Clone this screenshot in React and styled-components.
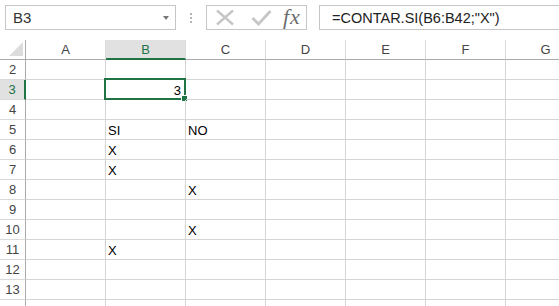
import React from "react";
import styled, { createGlobalStyle } from "styled-components";

const GREEN = "#217346";

const Global = createGlobalStyle`
  html, body { margin: 0; padding: 0; background: #fff; overflow: hidden; }
  body { font-family: "Liberation Sans", Arial, sans-serif; }
`;

const Page = styled.div`
  width: 559px;
  height: 306px;
  overflow: hidden;
  background: #fff;
`;

const FormulaRow = styled.div`
  display: flex;
  align-items: flex-start;
  height: 40px;
  padding: 5px 0 0 5px;
  box-sizing: border-box;
`;

const NameBox = styled.div`
  width: 171px;
  height: 25px;
  box-sizing: border-box;
  border: 1px solid #c6c6c6;
  display: flex;
  align-items: center;
  justify-content: space-between;
  padding: 0 6px 0 7px;
  font-size: 15px;
  color: #333;
`;

const Caret = styled.span`
  width: 0;
  height: 0;
  border-left: 3.5px solid transparent;
  border-right: 3.5px solid transparent;
  border-top: 4px solid #777;
  margin-top: 1px;
`;

const Grip = styled.div`
  width: 30px;
  height: 25px;
  display: flex;
  flex-direction: column;
  align-items: center;
  justify-content: center;
  gap: 2px;

  span {
    width: 2px;
    height: 2px;
    background: #b4b4b4;
  }
`;

const Buttons = styled.div`
  width: 101px;
  height: 25px;
  box-sizing: border-box;
  border: 1px solid #c6c6c6;
  display: flex;
  align-items: center;
  padding-left: 8px;
`;

const IconSlot = styled.div`
  width: ${(p) => p.w}px;
  height: 23px;
  display: flex;
  align-items: center;
`;

const Fx = styled.span`
  font-family: "Liberation Serif", "DejaVu Serif", serif;
  font-style: italic;
  font-size: 22px;
  color: #6d6d6d;
  letter-spacing: 1px;
  line-height: 1;
  margin-top: -1px;
`;

const FormulaInput = styled.div`
  flex: 1;
  height: 25px;
  margin-left: 12px;
  box-sizing: border-box;
  border: 1px solid #c6c6c6;
  border-right: none;
  display: flex;
  align-items: center;
  padding-left: 12px;
  font-size: 14.5px;
  color: #222;
  white-space: nowrap;
`;

const Sheet = styled.div`
  display: grid;
  grid-template-columns: 26px repeat(7, 80px);
  grid-auto-rows: 20px;
`;

const Corner = styled.div`
  box-sizing: border-box;
  border-right: 1px solid #ababab;
  border-bottom: 1px solid #ababab;
  display: flex;
  align-items: flex-end;
  justify-content: flex-end;
  padding: 0 2px 3px 0;
`;

const ColHead = styled.div`
  box-sizing: border-box;
  border-right: 1px solid #dadada;
  border-bottom: ${(p) => (p.active ? `2px solid ${GREEN}` : "1px solid #ababab")};
  background: ${(p) => (p.active ? "#e1e1e1" : "#fff")};
  color: ${(p) => (p.active ? GREEN : "#444")};
  font-size: 13px;
  display: flex;
  align-items: center;
  justify-content: center;
  padding-top: ${(p) => (p.active ? "1px" : "0")};
`;

const RowHead = styled.div`
  box-sizing: border-box;
  border-bottom: 1px solid #dadada;
  border-right: ${(p) => (p.active ? `2px solid ${GREEN}` : "1px solid #ababab")};
  background: ${(p) => (p.active ? "#e1e1e1" : "#fff")};
  color: ${(p) => (p.active ? GREEN : "#444")};
  font-size: 13px;
  display: flex;
  align-items: flex-end;
  justify-content: center;
  padding-bottom: 2px;
`;

const Cell = styled.div`
  position: relative;
  box-sizing: border-box;
  border-right: 1px solid #d4d4d4;
  border-bottom: 1px solid #d4d4d4;
  font-size: 13px;
  color: #000;
  display: flex;
  align-items: flex-end;
  justify-content: ${(p) => (p.right ? "flex-end" : "flex-start")};
  padding: 0 4px 1px 2px;
  white-space: nowrap;
`;

const Selection = styled.div`
  position: absolute;
  left: -2px;
  top: -2px;
  right: -1px;
  bottom: -1px;
  border: 2px solid ${GREEN};
  pointer-events: none;
`;

const Handle = styled.div`
  position: absolute;
  right: -4px;
  bottom: -4px;
  width: 5px;
  height: 5px;
  background: ${GREEN};
  border: 1px solid #fff;
`;

const cols = ["A", "B", "C", "D", "E", "F", "G"];
const rows = [2, 3, 4, 5, 6, 7, 8, 9, 10, 11, 12, 13, 14];
const LAST_VISIBLE = 13;

const data = {
  B3: "3",
  B5: "SI",
  C5: "NO",
  B6: "X",
  B7: "X",
  C8: "X",
  C10: "X",
  B11: "X",
};

export default function App() {
  return (
    <Page>
      <Global />
      <FormulaRow>
        <NameBox>
          B3
          <Caret />
        </NameBox>
        <Grip>
          <span />
          <span />
          <span />
        </Grip>
        <Buttons>
          <IconSlot w={36}>
            <svg width="20" height="17" viewBox="0 0 20 17">
              <path d="M2 1.5 L18 15.5 M18 1.5 L2 15.5" stroke="#c6c6c6" strokeWidth="2.4" fill="none" />
            </svg>
          </IconSlot>
          <IconSlot w={32}>
            <svg width="21" height="17" viewBox="0 0 21 17">
              <path d="M1.5 9 L7.5 15 L19.5 2" stroke="#c6c6c6" strokeWidth="2.8" fill="none" />
            </svg>
          </IconSlot>
          <IconSlot w={22}>
            <Fx>fx</Fx>
          </IconSlot>
        </Buttons>
        <FormulaInput>=CONTAR.SI(B6:B42;"X")</FormulaInput>
      </FormulaRow>

      <Sheet>
        <Corner>
          <svg width="14" height="14" viewBox="0 0 14 14">
            <path d="M14 0 L14 14 L0 14 Z" fill="#dcdcdc" />
          </svg>
        </Corner>
        {cols.map((c) => (
          <ColHead key={c} active={c === "B"}>
            {c}
          </ColHead>
        ))}
        {rows.map((r) => (
          <React.Fragment key={r}>
            {/* the row below 13 is only a sliver, its number sits off-screen */}
            <RowHead active={r === 3}>{r <= LAST_VISIBLE ? r : null}</RowHead>
            {cols.map((c) => {
              const id = c + r;
              const selected = id === "B3";
              return (
                <Cell key={id} right={selected}>
                  {data[id]}
                  {selected && (
                    <Selection>
                      <Handle />
                    </Selection>
                  )}
                </Cell>
              );
            })}
          </React.Fragment>
        ))}
      </Sheet>
    </Page>
  );
}
